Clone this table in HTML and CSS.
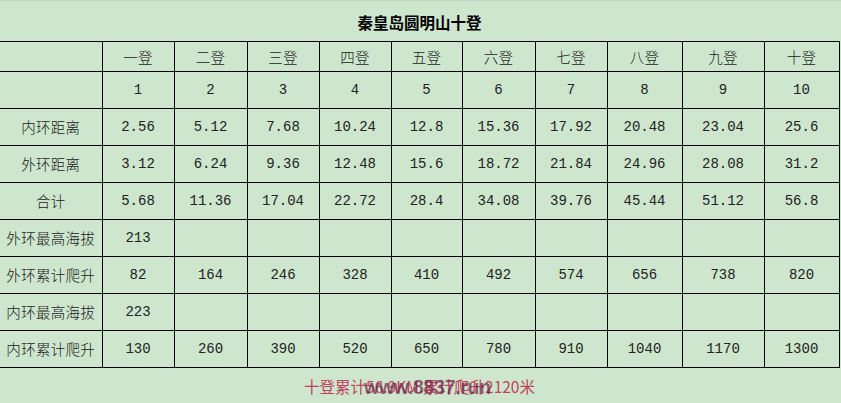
FILE: index.html
```html
<!DOCTYPE html>
<html lang="zh">
<head>
<meta charset="utf-8">
<title>秦皇岛圆明山十登</title>
<link rel="stylesheet" href="styles.css">
</head>
<body>
<div class="page">
  <div class="title">秦皇岛圆明山十登</div>
  <table class="grid">
    <colgroup>
      <col style="width:102px"><col style="width:72px"><col style="width:73px"><col style="width:72px"><col style="width:72px"><col style="width:71px"><col style="width:73px"><col style="width:72px"><col style="width:75px"><col style="width:82px"><col style="width:75px">
    </colgroup>
    <tr class="head"><td class="label"></td><td>一登</td><td>二登</td><td>三登</td><td>四登</td><td>五登</td><td>六登</td><td>七登</td><td>八登</td><td>九登</td><td>十登</td></tr>
    <tr><td class="label"></td><td class="num">1</td><td class="num">2</td><td class="num">3</td><td class="num">4</td><td class="num">5</td><td class="num">6</td><td class="num">7</td><td class="num">8</td><td class="num">9</td><td class="num">10</td></tr>
    <tr><td class="label">内环距离</td><td class="num">2.56</td><td class="num">5.12</td><td class="num">7.68</td><td class="num">10.24</td><td class="num">12.8</td><td class="num">15.36</td><td class="num">17.92</td><td class="num">20.48</td><td class="num">23.04</td><td class="num">25.6</td></tr>
    <tr><td class="label">外环距离</td><td class="num">3.12</td><td class="num">6.24</td><td class="num">9.36</td><td class="num">12.48</td><td class="num">15.6</td><td class="num">18.72</td><td class="num">21.84</td><td class="num">24.96</td><td class="num">28.08</td><td class="num">31.2</td></tr>
    <tr><td class="label">合计</td><td class="num">5.68</td><td class="num">11.36</td><td class="num">17.04</td><td class="num">22.72</td><td class="num">28.4</td><td class="num">34.08</td><td class="num">39.76</td><td class="num">45.44</td><td class="num">51.12</td><td class="num">56.8</td></tr>
    <tr><td class="label">外环最高海拔</td><td class="num">213</td><td></td><td></td><td></td><td></td><td></td><td></td><td></td><td></td><td></td></tr>
    <tr><td class="label">外环累计爬升</td><td class="num">82</td><td class="num">164</td><td class="num">246</td><td class="num">328</td><td class="num">410</td><td class="num">492</td><td class="num">574</td><td class="num">656</td><td class="num">738</td><td class="num">820</td></tr>
    <tr><td class="label">内环最高海拔</td><td class="num">223</td><td></td><td></td><td></td><td></td><td></td><td></td><td></td><td></td><td></td></tr>
    <tr><td class="label">内环累计爬升</td><td class="num">130</td><td class="num">260</td><td class="num">390</td><td class="num">520</td><td class="num">650</td><td class="num">780</td><td class="num">910</td><td class="num">1040</td><td class="num">1170</td><td class="num">1300</td></tr>
  </table>
  <div class="footer">
    <span class="note">十登累计56.9KM.累计爬升2120米<span class="mark">www.8837.run</span></span>
  </div>
</div>
</body>
</html>
```

FILE: styles.css
```css
html, body {
  margin: 0;
  padding: 0;
  background: #cde6cd;
}
.page {
  width: 841px;
  height: 403px;
  overflow: hidden;
  background: #cde6cd;
  border-top: 1px solid #c4d2c4;
  box-sizing: border-box;
  font-family: "Noto Sans CJK SC", "Noto Sans", sans-serif;
  color: #111;
}
.title {
  width: 839px;
  height: 40px;
  display: flex;
  align-items: center;
  justify-content: center;
  font-size: 15.5px;
  font-weight: bold;
  color: #000;
  padding-top: 2px;
  box-sizing: border-box;
}
.grid {
  border-collapse: collapse;
  table-layout: fixed;
  width: 839px;
}
.grid td {
  border: 1px solid #000;
  height: 36px;
  padding: 0;
  text-align: center;
  font-size: 14.5px;
  font-weight: 300;
  line-height: 16px;
  letter-spacing: 0.3px;
  color: #1a1a1a;
}
.grid tr td:first-child {
  border-left: none;
}
.grid tr.head td {
  height: 29px;
}
.grid td.num {
  font-family: "Liberation Mono", "DejaVu Sans Mono", monospace;
  font-size: 14px;
  font-weight: normal;
  letter-spacing: 0;
  color: #222;
}
.footer {
  width: 839px;
  height: 35px;
  display: flex;
  align-items: center;
  justify-content: center;
}
.note {
  position: relative;
  font-size: 15.5px;
  color: #c0445c;
  white-space: nowrap;
}
.mark {
  position: absolute;
  left: 60px;
  top: 1px;
  font-family: "Liberation Sans", "DejaVu Sans", sans-serif;
  font-weight: bold;
  font-size: 19.5px;
  color: rgba(110, 30, 70, 0.7);
  letter-spacing: -0.3px;
}
```
